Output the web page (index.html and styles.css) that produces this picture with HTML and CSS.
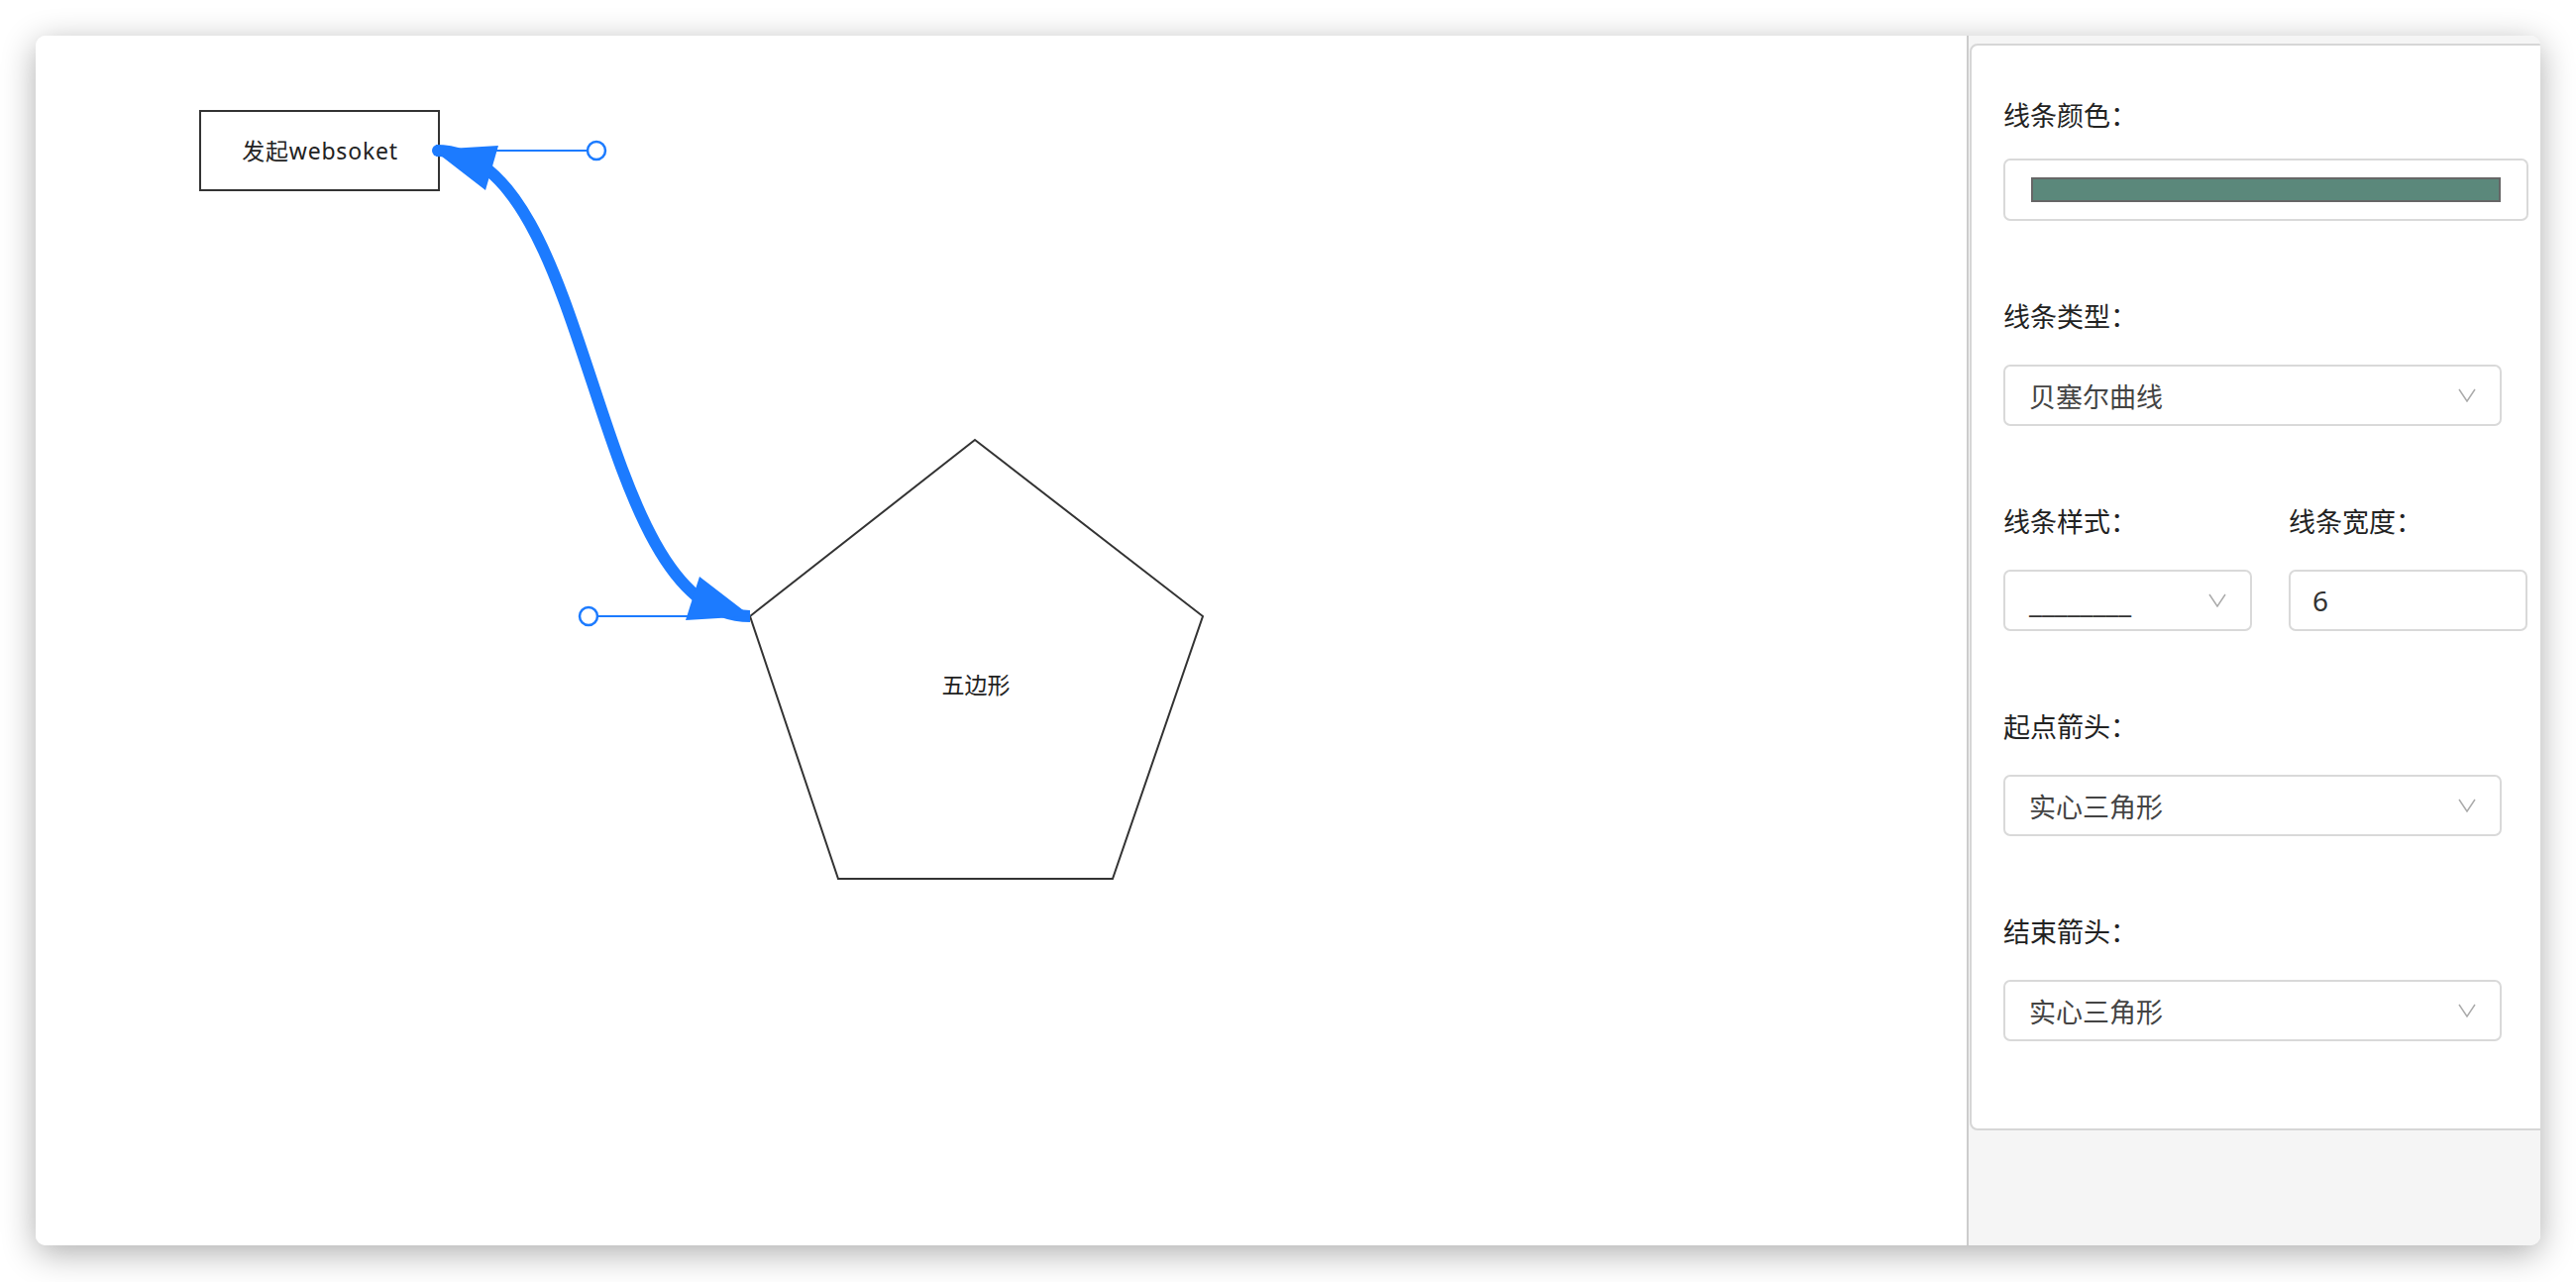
FILE: index.html
```html
<!DOCTYPE html>
<html lang="zh-CN">
<head>
    <meta charset="UTF-8">
    <meta name="viewport" content="width=device-width, initial-scale=1.0">
    <title>流程图编辑</title>
    <link rel="stylesheet" href="styles.css">
</head>
<body>
    <div class="window">
        <div class="canvas">
            <svg class="graph" width="1949" height="1221" viewBox="0 0 1949 1221">
                <!-- 节点 -->
                <rect class="node" x="166" y="76" width="241" height="80"></rect>
                <text class="node-text node-text-latin" x="287" y="116">发起websoket</text>

                <polygon class="node" points="948,408 1178,586 1087,851 810,851 721,586"></polygon>
                <text class="node-text" x="949" y="655">五边形</text>

                <!-- 贝塞尔曲线 -->
                <path class="edge" d="M404 116 C566 116, 558 586, 721 586"></path>
                <polygon class="arrow" points="401,115 467,111 454,156"></polygon>
                <circle class="arrow" cx="406" cy="116" r="6"></circle>
                <polygon class="arrow" points="722,586 670,546 656,590"></polygon>

                <!-- 调整点 -->
                <line class="handle-line" x1="407" y1="116" x2="557" y2="116"></line>
                <circle class="handle" cx="566" cy="116" r="9"></circle>
                <line class="handle-line" x1="567" y1="586" x2="700" y2="586"></line>
                <circle class="handle" cx="558" cy="586" r="9"></circle>
            </svg>
        </div>

        <div class="sidebar">
            <div class="panel">
                <div class="form">
                    <div class="item item-color">
                        <label>线条颜色：</label>
                        <div class="color-box"><span class="swatch"></span></div>
                    </div>

                    <div class="item">
                        <label>线条类型：</label>
                        <div class="select">
                            <span>贝塞尔曲线</span>
                            <svg class="chevron" width="18" height="14" viewBox="0 0 18 14"><polyline points="1,1 9,13 17,1"></polyline></svg>
                        </div>
                    </div>

                    <div class="row">
                        <div class="item">
                            <label>线条样式：</label>
                            <div class="select select-small">
                                <span class="dash">________</span>
                                <svg class="chevron" width="18" height="14" viewBox="0 0 18 14"><polyline points="1,1 9,13 17,1"></polyline></svg>
                            </div>
                        </div>
                        <div class="item">
                            <label>线条宽度：</label>
                            <div class="number-input">6</div>
                        </div>
                    </div>

                    <div class="item">
                        <label>起点箭头：</label>
                        <div class="select">
                            <span>实心三角形</span>
                            <svg class="chevron" width="18" height="14" viewBox="0 0 18 14"><polyline points="1,1 9,13 17,1"></polyline></svg>
                        </div>
                    </div>

                    <div class="item">
                        <label>结束箭头：</label>
                        <div class="select">
                            <span>实心三角形</span>
                            <svg class="chevron" width="18" height="14" viewBox="0 0 18 14"><polyline points="1,1 9,13 17,1"></polyline></svg>
                        </div>
                    </div>
                </div>
            </div>
        </div>
    </div>
</body>
</html>
```

FILE: styles.css
```css
body {
    margin: 0;
    height: 1294px;
    padding: 36px 36px 37px 36px;
    box-sizing: border-box;
    background-color: #fff;
    font-family: "Noto Sans", "Noto Sans CJK SC", sans-serif;
    color: #222;
}

.window {
    display: flex;
    height: 1221px;
    border-radius: 10px;
    overflow: hidden;
    background-color: #fff;
    box-shadow: 0 8px 34px rgba(0, 0, 0, 0.32);
}

.canvas {
    flex: 1;
    background-color: #fff;
}

.graph {
    display: block;
}

.node {
    fill: #fff;
    stroke: #333;
    stroke-width: 2;
}

.node-text {
    font-family: "Noto Sans", "Noto Sans CJK SC", sans-serif;
    font-size: 23px;
    fill: #222;
    text-anchor: middle;
    dominant-baseline: central;
}

.node-text-latin {
    letter-spacing: 0.8px;
}

.edge {
    fill: none;
    stroke: #1c7bff;
    stroke-width: 12;
}

.arrow {
    fill: #1c7bff;
}

.handle-line {
    stroke: #1c7bff;
    stroke-width: 2;
}

.handle {
    fill: #fff;
    stroke: #1c7bff;
    stroke-width: 2.5;
}

.sidebar {
    width: 577px;
    border-left: 2px solid #cccccc;
    background-color: #f5f5f5;
    overflow: hidden;
}

.panel {
    width: 620px;
    margin-top: 8px;
    margin-left: 1px;
    padding: 52px 0 88px 32px;
    background-color: #fff;
    border: 2px solid #d6d6d6;
    border-radius: 8px;
    box-sizing: border-box;
}

.form {
    display: flex;
    flex-direction: column;
    gap: 78px;
}

.item {
    display: flex;
    flex-direction: column;
    gap: 29px;
}

.item-color {
    gap: 24px;
}

label {
    font-size: 27px;
    line-height: 38px;
    color: #222;
}

.row {
    display: grid;
    grid-template-columns: 250px 240px;
    column-gap: 38px;
}

.color-box {
    width: 530px;
    height: 63px;
    padding: 17px 26px;
    box-sizing: border-box;
    border: 2px solid #d9d9d9;
    border-radius: 7px;
}

.swatch {
    display: block;
    height: 100%;
    background-color: #5b887b;
    border: 2px solid #666;
    box-sizing: border-box;
}

.select {
    display: flex;
    align-items: center;
    justify-content: space-between;
    width: 503px;
    height: 62px;
    padding: 0 24px;
    box-sizing: border-box;
    border: 2px solid #d9d9d9;
    border-radius: 7px;
    font-size: 27px;
    color: #444;
}

.select-small {
    width: 251px;
}

.dash {
    color: #333;
    font-size: 29px;
}

.chevron polyline {
    fill: none;
    stroke: #aaa;
    stroke-width: 1.5;
}

.number-input {
    display: flex;
    align-items: center;
    width: 241px;
    height: 62px;
    padding: 0 22px;
    box-sizing: border-box;
    border: 2px solid #d9d9d9;
    border-radius: 7px;
    font-size: 28px;
    color: #333;
}
```
